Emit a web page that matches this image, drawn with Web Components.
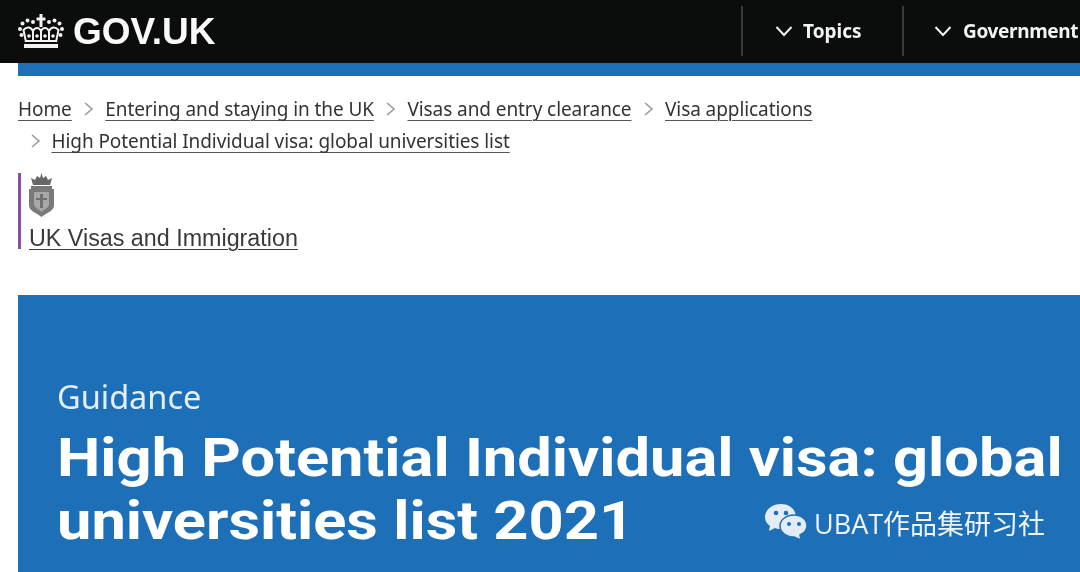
<!DOCTYPE html>
<html lang="en">
<head>
<meta charset="utf-8">
<title>GOV.UK</title>
<style>
  html, body { margin: 0; padding: 0; background: #fff; overflow: hidden; }
  body { width: 1080px; height: 572px; font-family: "Noto Sans", "Liberation Sans", sans-serif; filter: blur(0.45px); }
</style>
</head>
<body>
<gov-header>
  <nav-toggle>Topics</nav-toggle>
  <nav-toggle>Government</nav-toggle>
</gov-header>
<gov-breadcrumbs>
  <div class="row">
    <gov-crumb first>Home</gov-crumb>
    <gov-crumb>Entering and staying in the UK</gov-crumb>
    <gov-crumb>Visas and entry clearance</gov-crumb>
    <gov-crumb>Visa applications</gov-crumb>
  </div>
  <div class="row">
    <gov-crumb>High Potential Individual visa: global universities list</gov-crumb>
  </div>
</gov-breadcrumbs>
<org-logo>UK Visas and Immigration</org-logo>
<title-banner kicker="Guidance"><span>High Potential Individual visa: global</span> <span>universities list 2021</span></title-banner>
<wechat-mark>UBAT作品集研习社</wechat-mark>

<script>
customElements.define('nav-toggle',
    class extends HTMLElement {
        constructor() {
            super();
            this.attachShadow({mode: 'open'}).innerHTML = `
    <style>
    :host{
        display: flex;
        align-items: center;
        box-sizing: border-box;
        height: 50px;
        margin-top: 6px;
        padding-left: 32px;
        width: 161px;
        flex: none;
        border-left: 2px solid #3a3a3a;
        color: #f3f3f3;
        font-size: 19px;
        font-weight: 700;
        white-space: nowrap;
    }
    :host(:last-child){
        width: 178px;
        padding-left: 30px;
        letter-spacing: -0.36px;
    }
    svg{
        width: 18px;
        height: 12px;
        margin-right: 10px;
        flex: none;
    }
    :host(:last-child) svg{
        margin-right: 11px;
    }
    </style>
    <svg viewBox="0 0 18 12"><path d="M1.5 2 L9 10 L16.5 2" fill="none" stroke="#f3f3f3" stroke-width="2"/></svg>
    <slot></slot>
`;
        }
    }
);

customElements.define('gov-header',
    class extends HTMLElement {
        constructor() {
            super();
            this.attachShadow({mode: 'open'}).innerHTML = `
    <style>
    :host{
        display: block;
    }
    .bar{
        display: flex;
        justify-content: space-between;
        height: 63px;
        background: #0b0c0c;
        overflow: hidden;
    }
    .logo{
        display: flex;
        align-items: center;
        gap: 9px;
        padding-left: 18px;
        color: #fafafa;
        font-family: "Liberation Sans", Arial, sans-serif;
        font-size: 37px;
        font-weight: 700;
    }
    .nav{
        display: flex;
    }
    .strip{
        height: 13px;
        margin-left: 18px;
        background: #1d70b8;
    }
    </style>
    <div class="bar">
        <div class="logo">
            <svg width="46" height="35" viewBox="0 0 46 35">
                <g fill="#f2f2f2">
                    <rect x="21.500" y="0" width="3" height="13"/>
                    <rect x="18.500" y="3.500" width="9" height="3"/>
                    <circle cx="15" cy="8" r="2"/><circle cx="31" cy="8" r="2"/>
                    <circle cx="9.500" cy="6.500" r="2"/><circle cx="36.500" cy="6.500" r="2"/>
                    <circle cx="4.500" cy="9.500" r="2"/><circle cx="41.500" cy="9.500" r="2"/>
                    <circle cx="2" cy="15" r="2"/><circle cx="44" cy="15" r="2"/>
                    <circle cx="3.500" cy="21" r="2"/><circle cx="42.500" cy="21" r="2"/>
                    <rect x="6" y="30" width="34" height="4"/>
                </g>
                <g fill="none" stroke="#f2f2f2" stroke-width="2">
                    <path d="M8 28 L5.500 16 C9 12 13 13 15 17 L15 26"/>
                    <path d="M38 28 L40.500 16 C37 12 33 13 31 17 L31 26"/>
                    <path d="M15 17 C17 13 21 13 23 17 C25 13 29 13 31 17"/>
                    <path d="M23 17 V27"/>
                    <path d="M8 27 H38"/>
                </g>
                <g fill="#f2f2f2">
                    <circle cx="11" cy="22" r="1.800"/><circle cx="19" cy="22" r="1.800"/>
                    <circle cx="27" cy="22" r="1.800"/><circle cx="35" cy="22" r="1.800"/>
                </g>
            </svg>
            <span>GOV.UK</span>
        </div>
        <div class="nav"><slot></slot></div>
    </div>
    <div class="strip"></div>
`;
        }
    }
);

customElements.define('gov-crumb',
    class extends HTMLElement {
        constructor() {
            super();
            this.attachShadow({mode: 'open'}).innerHTML = `
    <style>
    :host{
        display: inline-flex;
        align-items: center;
        color: #333;
        font-size: 19px;
        letter-spacing: -0.08px;
        white-space: nowrap;
    }
    svg{
        width: 9px;
        height: 14px;
        margin: 0 12px 0 12.5px;
        flex: none;
    }
    :host([first]) svg{
        display: none;
    }
    a{
        text-decoration: underline;
        text-decoration-thickness: 1px;
        text-underline-offset: 4px;
        text-decoration-color: #555;
    }
    </style>
    <svg viewBox="0 0 9 14"><path d="M1 1 L8 7 L1 13" fill="none" stroke="#9a9a9a" stroke-width="1.5"/></svg>
    <a><slot></slot></a>
`;
        }
    }
);

customElements.define('gov-breadcrumbs',
    class extends HTMLElement {
        constructor() {
            super();
            this.attachShadow({mode: 'open'}).innerHTML = `
    <style>
    :host{
        display: block;
        padding: 17px 0 0 18px;
        height: 80px;
        box-sizing: border-box;
    }
    ::slotted(.row){
        display: flex;
        height: 32px;
        align-items: center;
    }
    </style>
    <slot></slot>
`;
        }
    }
);

customElements.define('org-logo',
    class extends HTMLElement {
        constructor() {
            super();
            this.attachShadow({mode: 'open'}).innerHTML = `
    <style>
    :host{
        display: block;
        box-sizing: border-box;
        width: max-content;
        height: 76px;
        margin: 17px 0 46px 18px;
        padding-left: 8px;
        border-left: 3px solid #8f4f9f;
        color: #3a3a3a;
        font-family: "Liberation Sans", Arial, sans-serif;
        font-size: 23.300px;
    }
    svg{
        display: block;
        margin: 0 0 7px -1px;
    }
    a{
        display: block;
        line-height: 27px;
        text-decoration: underline;
        text-decoration-thickness: 1px;
        text-underline-offset: 3px;
    }
    </style>
    <svg width="27" height="45" viewBox="0 0 27 45">
        <path d="M5 12 L3 5 L7 7 L9 3 L12 5 L13.500 0 L15 5 L18 3 L20 7 L24 5 L22 12 Z" fill="#666"/>
        <path d="M3 13 H24 V16 H3 Z" fill="#777"/>
        <path d="M1 16 H26 V32 C26 38 20 39 13.500 44 C7 39 1 38 1 32 Z" fill="#7a7a7a"/>
        <path d="M6 19 H21 V31 C21 35 16 36 13.500 39 C11 36 6 35 6 31 Z" fill="#a8a8a8"/>
        <path d="M12 21 H15 V35 H12 Z M8 25 H19 V27 H8 Z" fill="#707070"/>
    </svg>
    <a><slot></slot></a>
`;
        }
    }
);

customElements.define('title-banner',
    class extends HTMLElement {
        constructor() {
            super();
            this.attachShadow({mode: 'open'}).innerHTML = `
    <style>
    :host{
        display: block;
        box-sizing: border-box;
        height: 277px;
        margin-left: 18px;
        padding: 80px 0 0 39px;
        background: #1d70b8;
        color: #fff;
    }
    .kicker{
        font-size: 32.500px;
        line-height: 44px;
        color: #e4eef7;
    }
    h1{
        margin: 7px 0 0;
        font-family: Roboto, "Liberation Sans", sans-serif;
        font-size: 54px;
        line-height: 63px;
        font-weight: 700;
    }
    /* the reference face is wider than any installed one */
    ::slotted(span){
        display: block;
        width: max-content;
        transform: scaleX(1.137);
        transform-origin: left center;
    }
    </style>
    <div class="kicker"></div>
    <h1><slot></slot></h1>
`;
            this.shadowRoot.querySelector('.kicker').textContent = this.getAttribute('kicker');
        }
    }
);

// sits over the banner, bottom right
customElements.define('wechat-mark',
    class extends HTMLElement {
        constructor() {
            super();
            this.attachShadow({mode: 'open'}).innerHTML = `
    <style>
    :host{
        position: absolute;
        left: 765px;
        top: 503px;
        display: flex;
        align-items: flex-start;
        gap: 6px;
        color: #eef4fa;
        font-family: "Open Sans", "Noto Sans CJK SC", sans-serif;
        font-size: 27px;
        line-height: 41px;
        white-space: nowrap;
    }
    </style>
    <svg width="43" height="38" viewBox="0 0 43 38">
        <path d="M16 1 C7 1 0 7 0 14 C0 18 2 21 5 23 L4 28 L10 25 C12 26 14 26 16 26 C25 26 31 20 31 14 C31 7 25 1 16 1 Z" fill="#e3ecf5"/>
        <path d="M29 12 C21 12 15 17 15 23 C15 29 21 34 29 34 L36 37 L35 32 C39 30 42 27 42 23 C42 17 37 12 29 12 Z" fill="#e3ecf5" stroke="#1d70b8" stroke-width="1.500"/>
        <circle cx="11" cy="10" r="2.300" fill="#1d70b8"/><circle cx="21" cy="10" r="2.300" fill="#1d70b8"/>
        <circle cx="24" cy="21" r="2" fill="#1d70b8"/><circle cx="34" cy="21" r="2" fill="#1d70b8"/>
    </svg>
    <slot></slot>
`;
        }
    }
);
</script>
</body>
</html>
